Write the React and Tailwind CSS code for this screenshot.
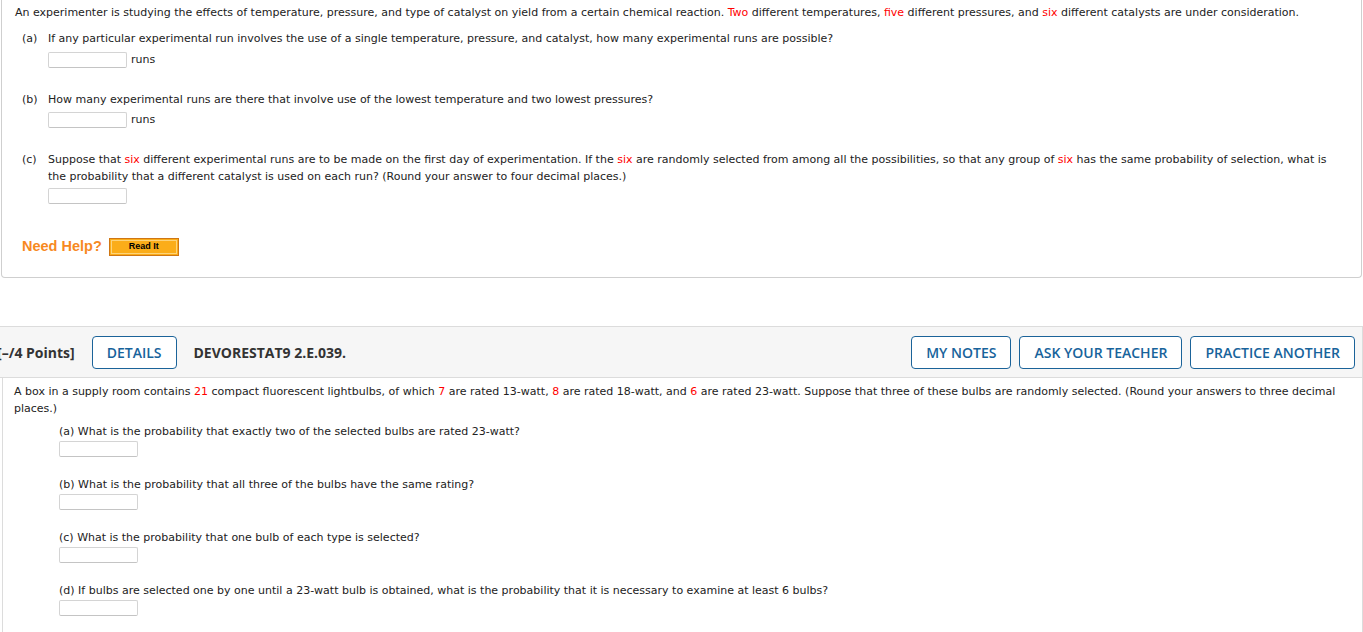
import React from "react";

const V = { fontFamily: '"DejaVu Sans", Verdana, sans-serif' };
const OS = { fontFamily: '"Open Sans", "Liberation Sans", sans-serif' };

function R({ children }) {
  return <span className="text-[#ff0000]">{children}</span>;
}

function Box({ className = "" }) {
  return <div className={"h-[16px] w-[79px] border border-[#d4d4d4] border-b-[#c4c4c4] bg-white rounded-[2px] " + className} />;
}

function Btn({ children }) {
  return (
    <div className="h-[33px] flex items-center px-[14px] border border-[#1b6399] rounded-[4px] text-[#17639b] text-[14px] font-semibold bg-white" style={OS}>
      {children}
    </div>
  );
}

export default function App() {
  return (
    <div className="bg-white w-[1363px] h-[632px] overflow-hidden text-[11px] text-[#222]" style={V}>
      {/* Card 1 */}
      <div className="ml-[1px] mr-[1px] border-l border-r border-b border-[#cfcfcf] rounded-b-[4px] h-[278px] pl-[13px] pt-[4px]">
        <div className="leading-[17px]">
          An experimenter is studying the effects of temperature, pressure, and type of catalyst on yield from a certain chemical reaction. <R>Two</R> different temperatures, <R>five</R> different pressures, and <R>six</R> different catalysts are under consideration.
        </div>
        <div className="flex mt-[9px] leading-[17px]">
          <div className="w-[26px] pl-[7px] shrink-0">(a)</div>
          <div className="pl-[7px]">
            <div>If any particular experimental run involves the use of a single temperature, pressure, and catalyst, how many experimental runs are possible?</div>
            <div className="flex items-center mt-[4px] gap-[4px]"><Box /><span>runs</span></div>
          </div>
        </div>
        <div className="flex mt-[23px] leading-[17px]">
          <div className="w-[26px] pl-[7px] shrink-0">(b)</div>
          <div className="pl-[7px]">
            <div>How many experimental runs are there that involve use of the lowest temperature and two lowest pressures?</div>
            <div className="flex items-center mt-[3px] gap-[4px]"><Box /><span>runs</span></div>
          </div>
        </div>
        <div className="flex mt-[23px] leading-[17px]">
          <div className="w-[26px] pl-[7px] shrink-0">(c)</div>
          <div className="pl-[7px] pr-[24px]">
            <div>Suppose that <R>six</R> different experimental runs are to be made on the first day of experimentation. If the <R>six</R> are randomly selected from among all the possibilities, so that any group of <R>six</R> has the same probability of selection, what is the probability that a different catalyst is used on each run? (Round your answer to four decimal places.)</div>
            <div className="mt-[3px]"><Box /></div>
          </div>
        </div>
        <div className="flex items-center mt-[32px] ml-[7px] gap-[7px]">
          <span className="text-[14.5px] font-bold text-[#f7891f]" style={{ fontFamily: '"Liberation Sans", Arial, sans-serif' }}>Need Help?</span>
          <div className="h-[18px] w-[70px] border border-[#cf7613] bg-[#fbad19] flex items-center justify-center p-[1px]">
            <div className="w-full h-full border border-[#fdd37a] flex items-center justify-center text-[9px] font-bold text-black" style={{ fontFamily: '"Liberation Sans", Arial, sans-serif' }}>Read It</div>
          </div>
        </div>
      </div>

      {/* Card 2 */}
      <div className="mt-[48px] border-t border-r border-[#dcdcdc]">
        <div className="h-[51px] bg-[#f6f6f6] border-b border-[#dcdcdc] flex items-center pr-[7px]">
          <span className="ml-[-3px] text-[14px] font-bold text-[#333]" style={OS}>[–/4 Points]</span>
          <div className="ml-[17px]"><Btn>DETAILS</Btn></div>
          <span className="ml-[17px] text-[14px] font-bold text-[#333]" style={OS}>DEVORESTAT9 2.E.039.</span>
          <div className="ml-auto flex gap-[8px]">
            <Btn>MY NOTES</Btn>
            <Btn>ASK YOUR TEACHER</Btn>
            <Btn>PRACTICE ANOTHER</Btn>
          </div>
        </div>
        <div className="ml-[2px] border-l border-[#dcdcdc] pl-[11px] pr-[12px] pt-[5px] h-[260px] leading-[17px]">
          <div>
            A box in a supply room contains <R>21</R> compact fluorescent lightbulbs, of which <R>7</R> are rated 13-watt, <R>8</R> are rated 18-watt, and <R>6</R> are rated 23-watt. Suppose that three of these bulbs are randomly selected. (Round your answers to three decimal places.)
          </div>
          <div className="ml-[45px] mt-[6px]">
            <div>(a) What is the probability that exactly two of the selected bulbs are rated 23-watt?</div>
            <Box className="mt-[1px]" />
            <div className="mt-[19px]">(b) What is the probability that all three of the bulbs have the same rating?</div>
            <Box className="mt-[1px]" />
            <div className="mt-[19px]">(c) What is the probability that one bulb of each type is selected?</div>
            <Box className="mt-[1px]" />
            <div className="mt-[19px]">(d) If bulbs are selected one by one until a 23-watt bulb is obtained, what is the probability that it is necessary to examine at least 6 bulbs?</div>
            <Box className="mt-[1px]" />
          </div>
        </div>
      </div>
    </div>
  );
}
